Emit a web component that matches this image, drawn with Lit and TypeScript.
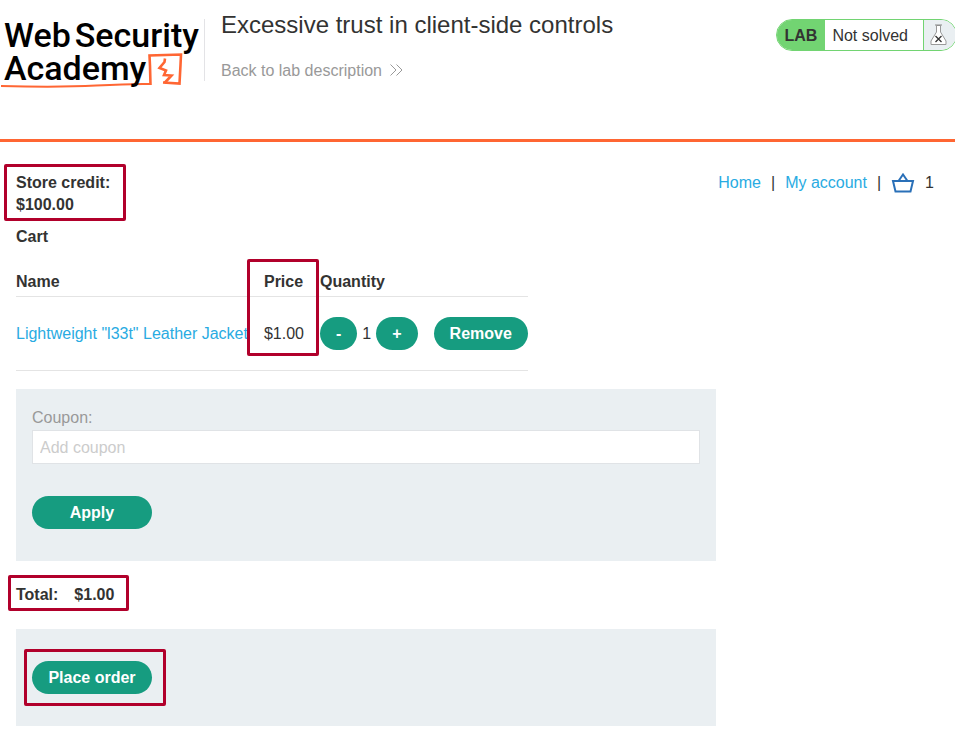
import { LitElement, html, css, svg } from "lit";
import { customElement, state } from "lit/decorators.js";

@customElement("lab-banner")
export class LabBanner extends LitElement {
  static styles = css`
    :host {
      display: block;
      overflow: hidden;
      border-bottom: 3px solid #ff6633;
    }
    .banner {
      display: flex;
      align-items: flex-start;
      height: 139px;
    }
    .logo {
      position: relative;
      isolation: isolate;
      flex: none;
      box-sizing: border-box;
      width: 204px;
      padding: 19px 0 0 4px;
      color: #000;
      font: 500 34px/33px Roboto, sans-serif;
      text-decoration: none;
    }
    .word-row {
      display: flex;
      gap: 4px;
    }
    .mark {
      position: absolute;
      left: 0;
      top: 50px;
      width: 204px;
      height: 40px;
      z-index: -1;
    }
    .heading {
      flex: 1;
      min-width: 0;
    }
    .rule {
      flex: none;
      width: 1px;
      height: 62px;
      margin-top: 19px;
      background: #e3e3e6;
    }
    h1 {
      margin: 11px 0 0 16px;
      font-size: 24px;
      line-height: 28px;
      font-weight: 400;
    }
    .back {
      display: inline-flex;
      align-items: center;
      gap: 8px;
      margin: 21px 0 0 16px;
      color: #999;
      line-height: 22px;
      text-decoration: none;
    }
    .back svg {
      margin-bottom: 2px;
    }
    .status {
      display: flex;
      flex: none;
      box-sizing: border-box;
      height: 32px;
      margin: 19px -2px 0 0;
      border: 1px solid #72d472;
      border-radius: 16px;
      overflow: hidden;
      line-height: 31px;
    }
    .tag {
      padding: 0 8px 0 8px;
      background: #72d472;
      font-weight: 700;
      line-height: 32px;
    }
    .state {
      padding: 0 15px 0 7px;
    }
    .flask {
      display: flex;
      align-items: center;
      justify-content: center;
      width: 32px;
      border-left: 1px solid #72d472;
      background: #eaeff2;
    }
    .flask svg {
      margin: 0 4px 2px 0;
    }
  `;

  render() {
    return html`
      <header class="banner">
        <a class="logo" href="#" aria-label="Web Security Academy">
          <svg class="mark" viewBox="0 50 204 40" fill="none" stroke="#ff6633" aria-hidden="true">
            <path d="M1 86Q60 87.500 96 85.500T151 84" stroke-width="2" />
            <path d="M150.500 85 150 66 149.500 55.500 181 54.500 180.500 65 179.500 83.500 163 82.500" stroke-width="2.600" />
            <path d="M165 58.500 164.500 62 159.500 68 166 70.500 164 75 171.500 75.500 164.500 83" stroke-width="2.600" />
          </svg>
          <span class="word-row"><span>Web</span><span>Security</span></span>
          <span>Academy</span>
        </a>
        <div class="rule"></div>
        <div class="heading">
          <h1>Excessive trust in client-side controls</h1>
          <a class="back" href="#">
            Back to lab description
            <svg width="13" height="12" viewBox="0 0 13 12" fill="none" stroke="#999" aria-hidden="true">
              <path d="M.5.5 6 6 .5 11.500M6.500.5 12 6 6.500 11.500" />
            </svg>
          </a>
        </div>
        <div class="status">
          <span class="tag">LAB</span>
          <span class="state">Not solved</span>
          <span class="flask">
            <svg width="17" height="21" viewBox="0 0 17 21" fill="none" aria-hidden="true">
              <path d="M6.500 1.500V8L1 17V20.500H16V17L10.500 8V1.500Z" fill="#fff" stroke="#999" />
              <path d="M5 1H12" stroke="#888" />
              <path d="M5.500 12 11.500 18M11.500 12 5.500 18" stroke="#333" stroke-width="1.300" />
            </svg>
          </span>
        </div>
      </header>
    `;
  }
}

@customElement("app-root")
export class AppRoot extends LitElement {
  static styles = css`
    :host {
      display: block;
      color: #333332;
      background: #fff;
      font: 16px/22px "Liberation Sans", Arial, sans-serif;
    }
    main {
      padding: 30px 16px 14px;
    }
    a {
      color: #29abe2;
      text-decoration: none;
    }
    .top {
      display: flex;
      justify-content: space-between;
      align-items: flex-start;
    }
    .credit {
      margin: 0;
      font-weight: 700;
    }
    .credit span {
      display: block;
    }
    nav {
      display: flex;
      align-items: center;
      gap: 10px;
      padding-right: 5px;
    }
    .basket {
      display: block;
    }
    .marked {
      position: relative;
    }
    .marked::after {
      content: "";
      position: absolute;
      border: 3px solid #b1002b;
      border-radius: 2px;
      pointer-events: none;
    }
    .credit::after {
      inset: -8px -16px -5px -12px;
    }
    .price-head::after {
      inset: -12px 1px -60px -17px;
    }
    .total::after {
      inset: -9px -15px -5px -8px;
    }
    .order::after {
      inset: -12px -14px -12px -8px;
    }
    h2 {
      margin: 10px 0 23px;
      font-size: 16px;
      line-height: 22px;
    }
    table {
      border-spacing: 0;
      border-bottom: 1px solid #e4e4e4;
    }
    th {
      padding: 0 16px 3px 0;
      border-bottom: 1px solid #e4e4e4;
      text-align: left;
      vertical-align: top;
    }
    td {
      padding: 20px 16px 20px 0;
      vertical-align: middle;
      white-space: nowrap;
    }
    th:last-child,
    td:last-child {
      padding-right: 0;
    }
    .quantity {
      display: flex;
      align-items: center;
      gap: 5px;
    }
    button {
      min-height: 33px;
      padding: 0 16px;
      border: 0;
      border-radius: 17px;
      background: #169c80;
      color: #fff;
      font: 700 16px/22px "Liberation Sans", Arial, sans-serif;
    }
    .wide {
      min-width: 120px;
    }
    .panel {
      box-sizing: border-box;
      max-width: 700px;
      padding: 16px 16px 32px;
      background: #eaeff2;
    }
    .coupon {
      margin-top: 18px;
    }
    .coupon label {
      display: block;
      padding: 2px 0 1px;
      color: #999;
    }
    input {
      display: block;
      box-sizing: border-box;
      width: 100%;
      height: 34px;
      margin-bottom: 32px;
      padding: 2px 7px 0;
      border: 1px solid #e0e3e6;
      background: #fff;
      font: inherit;
      color: inherit;
    }
    input::placeholder {
      color: #ccc;
    }
    .total {
      display: flex;
      gap: 16px;
      width: fit-content;
      margin: 23px 0;
      font-weight: 700;
    }
    .checkout {
      padding-top: 32px;
    }
    .order {
      width: fit-content;
    }
    .order button {
      display: block;
    }
  `;

  @state() private quantity = 1;

  private change(step: number) {
    this.quantity = Math.max(0, this.quantity + step);
  }

  private basket() {
    return svg`<svg class="basket" width="24" height="20" viewBox="0 0 24 20" fill="none" stroke="#2a70b8" stroke-width="2">
      <path d="M2 8H22L19.500 18.500H4.500Z" />
      <path d="M7.500 8 12 1.500 16.500 8" />
    </svg>`;
  }

  render() {
    const total = "$" + this.quantity.toFixed(2);
    return html`
      <lab-banner></lab-banner>
      <main>
        <div class="top">
          <p class="credit marked"><span>Store credit:</span><span>$100.00</span></p>
          <nav>
            <a href="#">Home</a><span>|</span>
            <a href="#">My account</a><span>|</span>
            <a href="#" aria-label="Basket">${this.basket()}</a>
            <span>${this.quantity}</span>
          </nav>
        </div>
        <h2>Cart</h2>
        <table>
          <thead>
            <tr>
              <th>Name</th>
              <th class="price-head marked">Price</th>
              <th>Quantity</th>
              <th></th>
            </tr>
          </thead>
          <tbody>
            <tr>
              <td><a href="#">Lightweight "l33t" Leather Jacket</a></td>
              <td>$1.00</td>
              <td>
                <div class="quantity">
                  <button aria-label="Decrease" @click=${() => this.change(-1)}>-</button>
                  <span>${this.quantity}</span>
                  <button aria-label="Increase" @click=${() => this.change(1)}>+</button>
                </div>
              </td>
              <td><button>Remove</button></td>
            </tr>
          </tbody>
        </table>
        <section class="panel coupon">
          <label for="coupon">Coupon:</label>
          <input id="coupon" type="text" placeholder="Add coupon" />
          <button class="wide">Apply</button>
        </section>
        <div class="total marked"><span>Total:</span><span>${total}</span></div>
        <section class="panel checkout">
          <div class="order marked"><button class="wide">Place order</button></div>
        </section>
      </main>
    `;
  }
}
